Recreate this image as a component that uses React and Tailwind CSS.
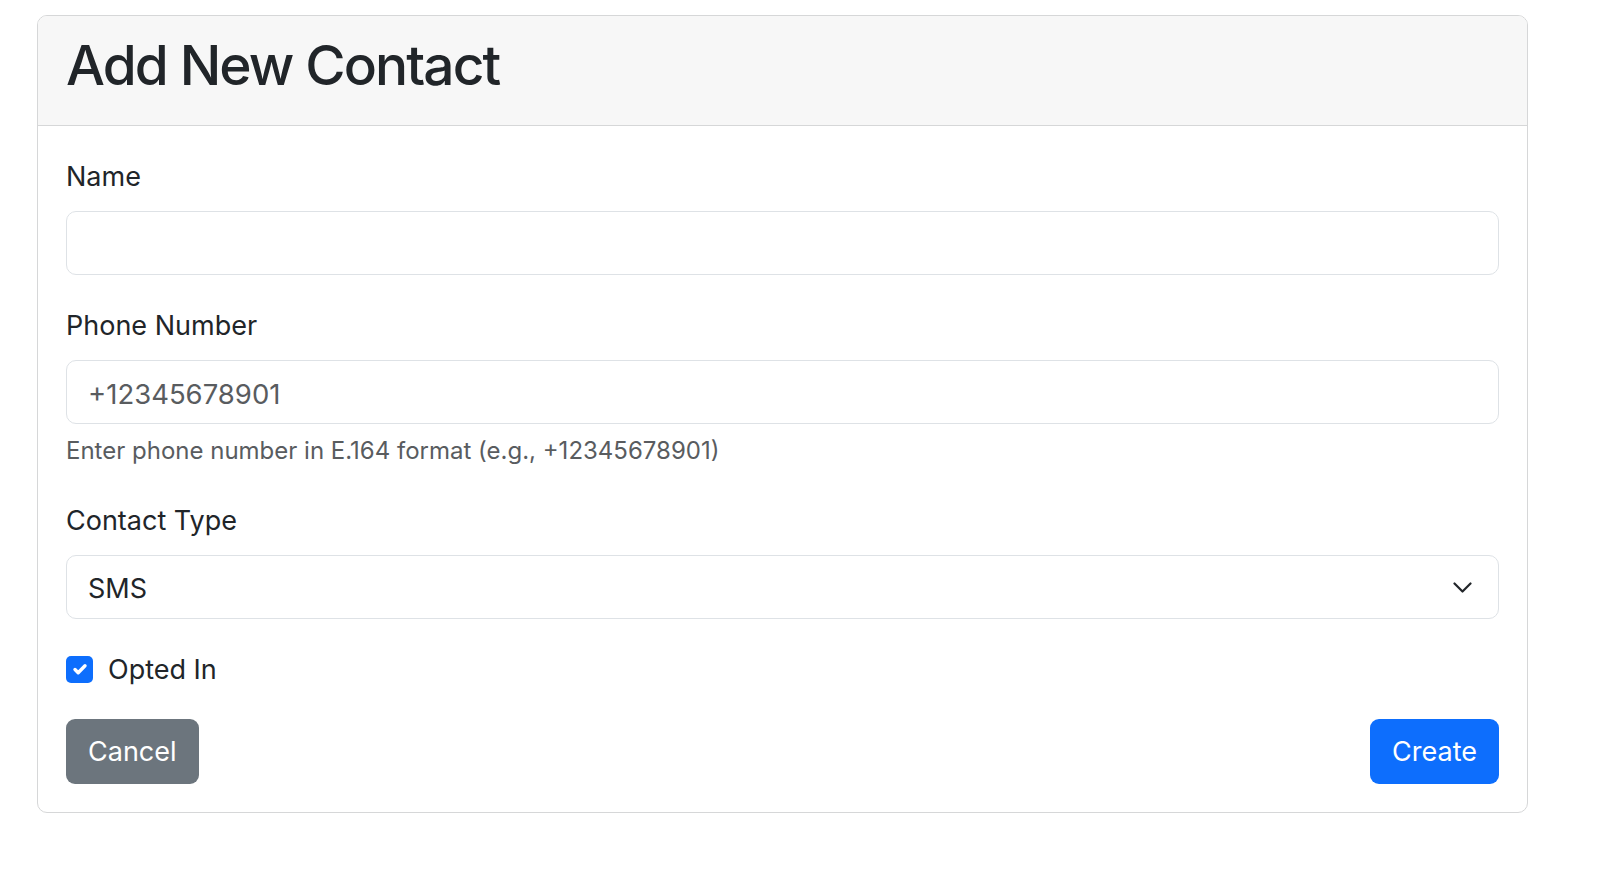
import React from "react";

const Field = ({ label, children, help }) => {
  return (
    <div className="mb-[29px]">
      <label className="block mb-[13px] text-[27px] leading-[43px] text-[#212529]">
        {label}
      </label>
      {children}
      {help && (
        <div className="mt-[9px] text-[24px] leading-[36.5px] text-[#595c5f]">
          {help}
        </div>
      )}
    </div>
  );
};

const App = () => {
  return (
    <div
      className="min-h-screen bg-white pt-[15px] pl-[37px]"
      style={{ fontFamily: "Inter, 'Noto Sans', sans-serif" }}
    >
      <div className="w-[1491px] border border-[#d6d7d8] rounded-[10px] overflow-hidden">
        {/* header */}
        <div className="bg-[#f7f7f7] border-b border-[#d6d7d8] px-[28px] pt-[16px] pb-[14px]">
          <h2 className="mb-[12px] text-[55px] leading-[67px] font-medium text-[#212529] tracking-[-1.9px]">
            Add New Contact
          </h2>
        </div>

        {/* body */}
        <div className="px-[28px] pt-[29px] pb-[28px]">
          <Field label="Name">
            <input
              type="text"
              className="block w-full h-[64px] px-[21px] pt-[4px] border border-[#dee2e6] rounded-[10px] text-[27.5px] text-[#212529] outline-none"
            />
          </Field>

          <Field
            label="Phone Number"
            help="Enter phone number in E.164 format (e.g., +12345678901)"
          >
            <input
              type="text"
              placeholder="+12345678901"
              className="block w-full h-[64px] px-[21px] pt-[4px] border border-[#dee2e6] rounded-[10px] text-[27.5px] text-[#212529] placeholder:text-[#595c5f] outline-none"
            />
          </Field>

          <Field label="Contact Type">
            <div className="flex items-center justify-between w-full h-[64px] pl-[21px] pr-[26px] border border-[#dee2e6] rounded-[10px]">
              <span className="pt-[5px] text-[27px] text-[#212529]">SMS</span>
              <svg
                className="w-[19px] h-[11px] mt-[2px]"
                viewBox="0 0 19 11"
                fill="none"
                stroke="#212529"
                strokeWidth="2.2"
                strokeLinecap="round"
                strokeLinejoin="round"
              >
                <path d="M1.5 1.5 9.5 9.5 17.5 1.5" />
              </svg>
            </div>
          </Field>

          <div className="flex items-center gap-[15px] mb-[28px] h-[43px]">
            <span className="flex items-center justify-center w-[27px] h-[27px] rounded-[5px] bg-[#0d6efd]">
              <svg
                className="w-[20px] h-[20px]"
                viewBox="0 0 20 20"
                fill="none"
                stroke="#fff"
                strokeWidth="3.4"
                strokeLinecap="round"
                strokeLinejoin="round"
              >
                <path d="m5 10.5 3.2 3.2 6.8-7" />
              </svg>
            </span>
            <span className="text-[27px] leading-[43px] text-[#212529]">
              Opted In
            </span>
          </div>

          <div className="flex justify-between">
            <button className="h-[65px] px-[22px] pt-[3px] rounded-[9px] bg-[#6c757d] text-white text-[27px]">
              Cancel
            </button>
            <button className="h-[65px] px-[22px] pt-[3px] rounded-[9px] bg-[#0d6efd] text-white text-[27px]">
              Create
            </button>
          </div>
        </div>
      </div>
    </div>
  );
};

export default App;
